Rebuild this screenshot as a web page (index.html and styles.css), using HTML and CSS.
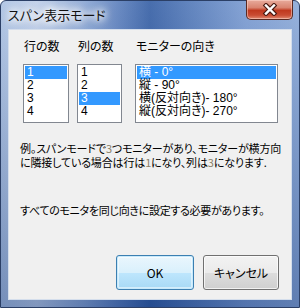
FILE: index.html
```html
<!DOCTYPE html>
<html lang="ja">
<head>
    <meta charset="UTF-8">
    <title>スパン表示モード</title>
    <link rel="stylesheet" href="styles.css">
</head>
<body>
    <div class="window">
        <!-- Title bar -->
        <div class="titlebar">
            <span class="title">スパン表示モード</span>
            <button class="close-btn" aria-label="閉じる">
                <svg width="16" height="13" viewBox="0 0 16 13">
                    <path d="M4 2.5 L12 10.5 M12 2.5 L4 10.5" stroke="#4a1a12" stroke-width="4.6" stroke-linecap="square"/>
                    <path d="M4 2.5 L12 10.5 M12 2.5 L4 10.5" stroke="#fff" stroke-width="2.4" stroke-linecap="square"/>
                </svg>
            </button>
        </div>

        <!-- Client area -->
        <div class="client">
            <div class="lists">
                <div class="col col-rows">
                    <div class="label">行の数</div>
                    <ul class="listbox">
                        <li class="selected">1</li>
                        <li>2</li>
                        <li>3</li>
                        <li>4</li>
                    </ul>
                </div>
                <div class="col col-cols">
                    <div class="label">列の数</div>
                    <ul class="listbox">
                        <li>1</li>
                        <li>2</li>
                        <li class="selected">3</li>
                        <li>4</li>
                    </ul>
                </div>
                <div class="col col-orient">
                    <div class="label">モニターの向き</div>
                    <ul class="listbox">
                        <li class="selected">横 - 0°</li>
                        <li>縦 - 90°</li>
                        <li>横(反対向き)- 180°</li>
                        <li>縦(反対向き)- 270°</li>
                    </ul>
                </div>
            </div>

            <p class="note">例。スパンモードで<span class="num">3</span>つモニターがあり、モニターが横方向</p>
            <p class="note note-cont">に隣接している場合は行は<span class="num">1</span>になり、列は<span class="num">3</span>になります.</p>
            <p class="note note-warn">すべてのモニタを同じ向きに設定する必要があります。</p>

            <div class="buttons">
                <button class="btn btn-default">OK</button>
                <button class="btn">キャンセル</button>
            </div>
        </div>
    </div>
</body>
</html>
```

FILE: styles.css
```css
* {
    margin: 0;
    padding: 0;
    box-sizing: border-box;
}

body {
    width: 300px;
    height: 308px;
    background: #fff;
    font-family: "Noto Sans CJK JP", "Liberation Sans", sans-serif;
    font-feature-settings: "palt";
    color: #000;
}

/* Aero window frame */
.window {
    width: 300px;
    height: 308px;
    display: flex;
    flex-direction: column;
    padding: 0 7px 7px;
    border: 1px solid #2b3f66;
    border-radius: 6px 6px 0 0;
    background:
        linear-gradient(to bottom, rgba(255, 255, 255, 0.12), rgba(20, 50, 110, 0.35)),
        linear-gradient(to right, #a9c0e2 0%, #bccde8 12%, #86a3d2 28%, #5479b9 40%, #2f5aa2 50%, #4a72b4 62%, #7597cf 82%, #88a7d7 100%);
}

.titlebar {
    height: 28px;
    display: flex;
    align-items: flex-start;
    justify-content: space-between;
}

.title {
    margin-top: 6px;
    font-size: 13px;
    line-height: 16px;
    color: #111;
    text-shadow: 0 0 6px #fff, 0 0 8px #fff, 0 0 10px #fff, 0 0 12px #fff;
}

.close-btn {
    width: 47px;
    height: 20px;
    margin: -1px -1px 0 0;
    display: flex;
    align-items: center;
    justify-content: center;
    border: 1px solid #5a2a22;
    border-top: none;
    border-radius: 0 0 5px 5px;
    background: linear-gradient(to bottom, #e8ab9c 0%, #d98470 40%, #c0391f 55%, #c94c33 80%, #e08a72 100%);
    box-shadow: inset 0 0 0 1px rgba(255, 220, 210, 0.5);
}

/* Dialog body */
.client {
    flex: 1;
    display: flex;
    flex-direction: column;
    padding: 9px 12px 9px 14px;
    border: 1px solid #d4deec;
    background: #f0f0f0;
}

.lists {
    display: flex;
}

.col-rows {
    width: 46px;
    margin-right: 8px;
}

.col-cols {
    width: 45px;
    margin-right: 13px;
}

.col-orient {
    width: 143px;
}

.label {
    font-size: 12px;
    line-height: 14px;
    padding-left: 1px;
    margin-bottom: 11px;
}

.listbox {
    list-style: none;
    height: 59px;
    padding: 1px;
    border: 1px solid #828790;
    background: #fff;
}

.listbox li {
    height: 13px;
    padding-left: 2px;
    font-family: "Liberation Sans", "Noto Sans CJK JP", sans-serif;
    font-size: 12px;
    line-height: 13px;
    white-space: nowrap;
}

.listbox li.selected {
    background: #3399ff;
    color: #fff;
}

.note {
    margin-top: 18px;
    margin-left: -3px;
    font-size: 11px;
    line-height: 14px;
    letter-spacing: -0.15px;
    white-space: nowrap;
}

.note .num {
    color: #8a8068;
}

.note-cont {
    margin-top: 0;
}

.note-warn {
    margin-top: 34px;
    letter-spacing: -0.3px;
}

/* Buttons */
.buttons {
    margin-top: auto;
    display: flex;
    justify-content: flex-end;
    gap: 9px;
}

.btn {
    height: 35px;
    width: 76px;
    border: 1px solid #707070;
    border-radius: 3px;
    font-family: "Noto Sans CJK JP", "Liberation Sans", sans-serif;
    font-feature-settings: "palt";
    font-size: 12px;
    color: #000;
    background: linear-gradient(to bottom, #f2f2f2 0%, #ebebeb 50%, #dddddd 51%, #cfcfcf 100%);
    box-shadow: inset 0 0 0 1px rgba(255, 255, 255, 0.7);
}

.btn-default {
    width: 78px;
    border-color: #3c7fb1;
    background: linear-gradient(to bottom, #eaf6fd 0%, #d9f0fc 50%, #bee6fd 51%, #a7d9f5 100%);
    box-shadow: inset 0 0 0 1px #c8eafc, inset 0 0 0 2px rgba(255, 255, 255, 0.5);
}
```
